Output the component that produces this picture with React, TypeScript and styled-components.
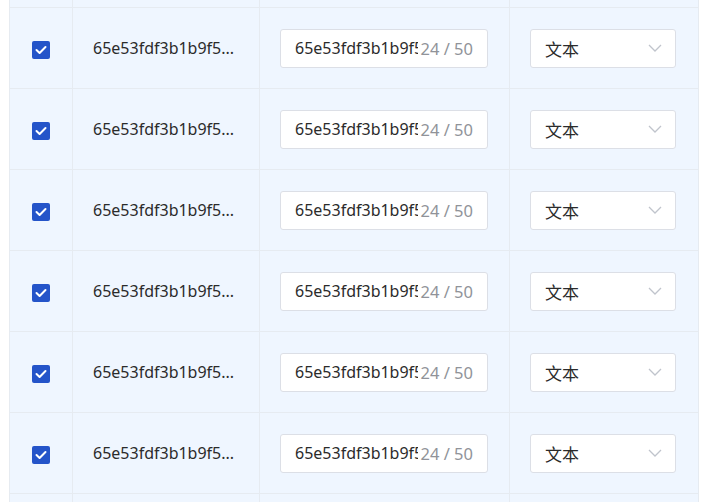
import React from "react";
import styled, { createGlobalStyle } from "styled-components";

const Global = createGlobalStyle`
  html, body { margin: 0; padding: 0; background: #ffffff; }
  body { font-family: "Noto Sans", "Noto Sans CJK SC", sans-serif; overflow: hidden; }
  * { box-sizing: border-box; }
`;

const Viewport = styled.div`
  width: 702px;
  height: 502px;
  overflow: hidden;
  padding-left: 9px;
`;

const Table = styled.div`
  margin-top: -73px;
  border-left: 1px solid #e6ebf1;
  background: #eff6ff;
  width: 690px;
`;

const Row = styled.div`
  display: grid;
  grid-template-columns: 63px 187px 250px 189px;
  height: 81px;
`;

const Cell = styled.div<{ $align?: "center" | "start" }>`
  display: flex;
  align-items: center;
  justify-content: ${(p) => (p.$align === "center" ? "center" : "flex-start")};
  padding: 0 20px;
  border-right: 1px solid #e6ebf1;
  border-bottom: 1px solid #e6ebf1;
  min-width: 0;
`;

const Check = styled.span`
  width: 18px;
  height: 18px;
  margin-top: 4px;
  border-radius: 2px;
  background: #2454c9;
  display: inline-flex;
  align-items: center;
  justify-content: center;
`;

const IdText = styled.span`
  font-size: 16px;
  color: #2b2b2b;
  white-space: nowrap;
  overflow: hidden;
  text-overflow: ellipsis;
`;

const InputBox = styled.div`
  width: 208px;
  height: 39px;
  background: #fff;
  border: 1px solid #dcdfe6;
  border-radius: 3px;
  display: flex;
  align-items: center;
  padding: 0 14px 0 14px;
  gap: 3px;
`;

const InputValue = styled.span`
  flex: 1;
  min-width: 0;
  overflow: hidden;
  white-space: nowrap;
  font-size: 16px;
  color: #2b2b2b;
`;

const Counter = styled.span`
  font-size: 16.5px;
  color: #909399;
  white-space: nowrap;
`;

const SelectBox = styled.div`
  width: 146px;
  height: 39px;
  background: #fff;
  border: 1px solid #dcdfe6;
  border-radius: 3px;
  display: flex;
  align-items: center;
  justify-content: space-between;
  padding: 0 13px 0 14px;
`;

const SelectText = styled.span`
  font-family: "Noto Sans CJK SC", sans-serif;
  font-size: 17px;
  color: #2b2b2b;
`;

const CheckIcon = () => (
  <svg width="12" height="10" viewBox="0 0 12 10">
    <path d="M1.5 5 L4.6 8 L10.5 2" fill="none" stroke="#fff" strokeWidth="2" strokeLinecap="round" strokeLinejoin="round" />
  </svg>
);

const Chevron = () => (
  <svg width="14" height="8" viewBox="0 0 14 8">
    <path d="M1 1 L7 7 L13 1" fill="none" stroke="#c0c4cc" strokeWidth="1.3" />
  </svg>
);

const id = "65e53fdf3b1b9f5c2a7d8e10";

export default function App() {
  const rows = Array.from({ length: 8 });
  return (
    <>
      <Global />
      <Viewport>
        <Table>
          {rows.map((_, i) => (
            <Row key={i}>
              <Cell $align="center">
                <Check>
                  <CheckIcon />
                </Check>
              </Cell>
              <Cell>
                <IdText>65e53fdf3b1b9f5...</IdText>
              </Cell>
              <Cell>
                <InputBox>
                  <InputValue>{id}</InputValue>
                  <Counter>24 / 50</Counter>
                </InputBox>
              </Cell>
              <Cell>
                <SelectBox>
                  <SelectText>文本</SelectText>
                  <Chevron />
                </SelectBox>
              </Cell>
            </Row>
          ))}
        </Table>
      </Viewport>
    </>
  );
}
